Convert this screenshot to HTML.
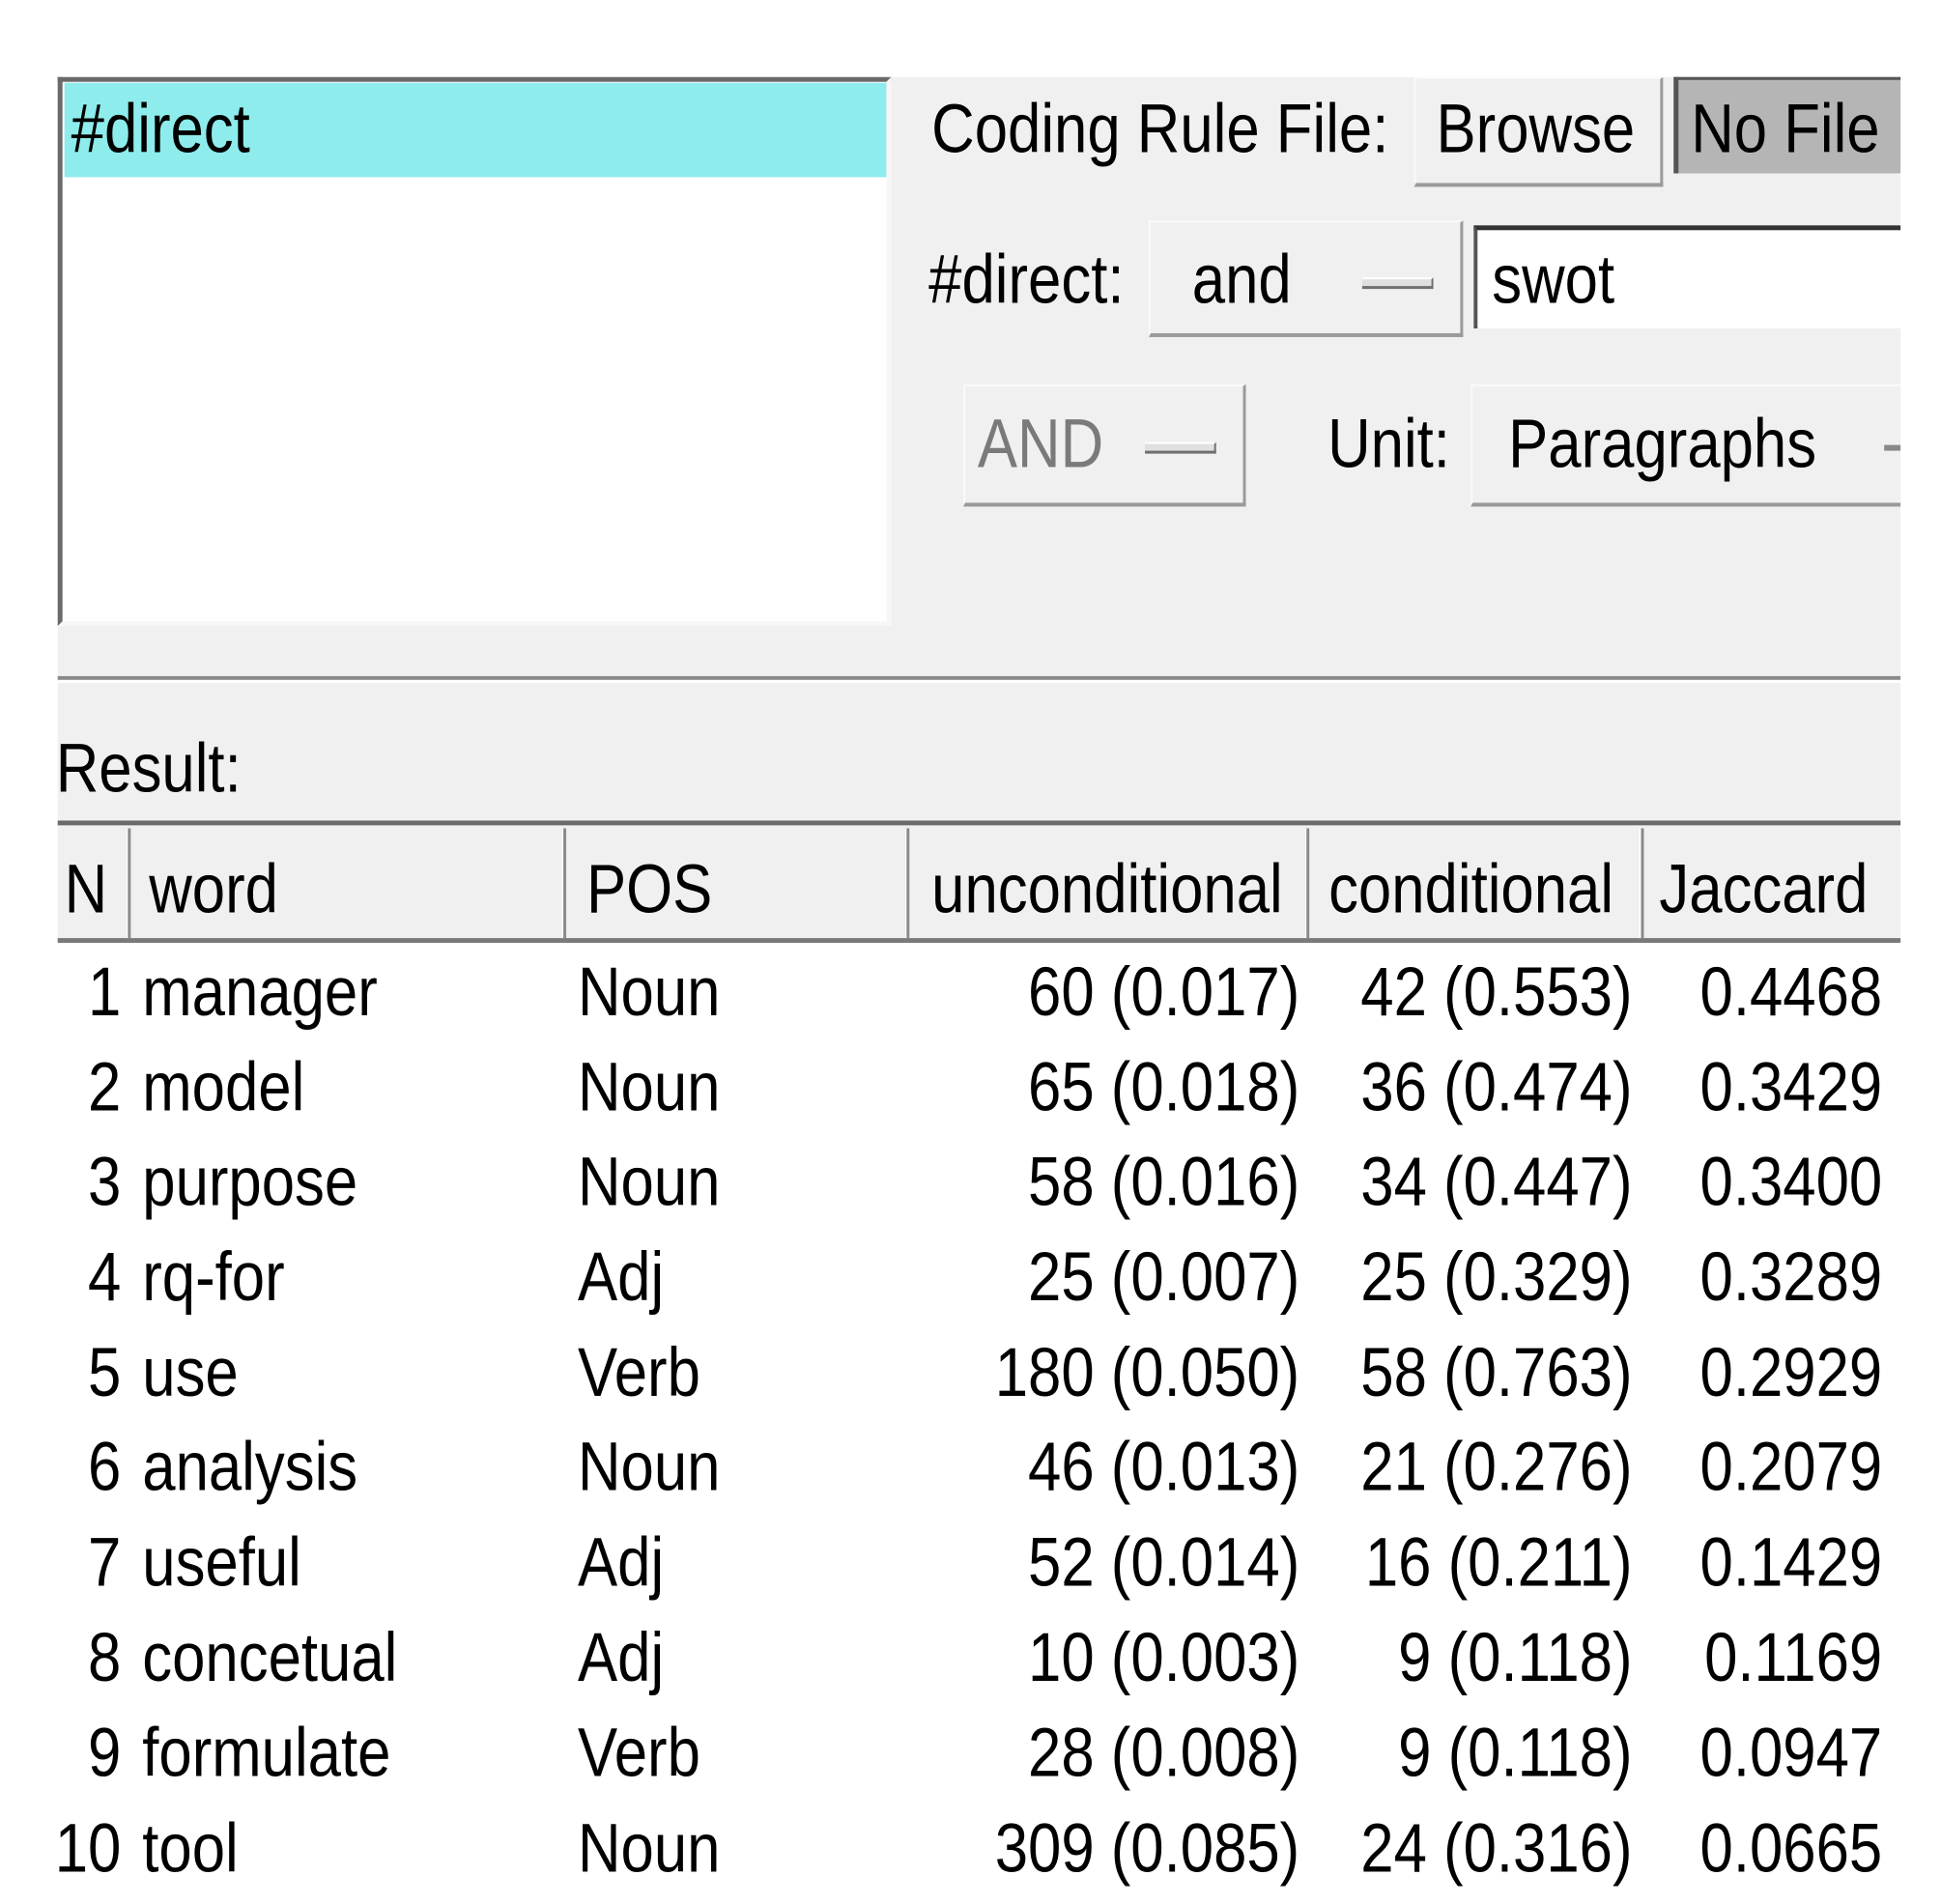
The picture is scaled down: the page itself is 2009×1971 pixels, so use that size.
<!DOCTYPE html>
<html><head><meta charset="utf-8"><style>
html,body{margin:0;padding:0;background:#fff;}
body{width:2009px;height:1971px;position:relative;overflow:hidden;font-family:"Liberation Sans",Arial,sans-serif;color:#000;}
#w{position:absolute;left:0;top:0;width:2009px;height:1971px;transform:scale(0.995,0.997);transform-origin:0 0;}
.a{position:absolute;box-sizing:border-box;}
.t{position:absolute;font-size:62px;line-height:62px;transform:scaleY(1.16);white-space:nowrap;}
.r{text-align:right;}
.btn{position:absolute;box-sizing:border-box;background:#f0f0f0;border-top:2px solid #fafafa;border-left:2px solid #fafafa;border-right:3px solid #9a9a9a;border-bottom:4px solid #9a9a9a;}
.ind{position:absolute;height:12px;background:#e0e0e0;border-top:2px solid #fff;border-bottom:3px solid #707070;border-right:2px solid #707070;box-sizing:border-box;}
</style></head><body><div id="w">
<div class="a" style="left:60px;top:80px;width:1917px;height:622px;background:#f0f0f0;"></div>
<div class="a" style="left:60px;top:702px;width:1917px;height:4px;background:#8a8a8a;"></div>
<div class="a" style="left:60px;top:706px;width:1917px;height:3px;background:#fff;"></div>
<div class="a" style="left:60px;top:709px;width:1917px;height:145px;background:#f0f0f0;"></div>
<div class="a" style="left:60px;top:80px;width:867px;height:570px;background:#fff;border-top:5px solid #6a6a6a;border-left:5px solid #6a6a6a;border-right:5px solid #f7f7f7;border-bottom:5px solid #f7f7f7;"></div>
<div class="a" style="left:67px;top:86px;width:855px;height:98px;background:#8eecec;"></div>
<div class="t" style="left:74px;top:104px;">#direct</div>
<div class="t" style="left:969px;top:104px;">Coding Rule File:</div>
<div class="btn" style="left:1471px;top:80px;width:259px;height:114px;"></div>
<div class="t" style="left:1494px;top:104px;">Browse</div>
<div class="a" style="left:1741px;top:80px;width:236px;height:100px;background:#b5b5b5;border-left:5px solid #555;border-top:3px solid #555;"></div>
<div class="t" style="left:1759px;top:104px;">No File</div>
<div class="t" style="left:966px;top:260px;">#direct:</div>
<div class="btn" style="left:1195px;top:229px;width:327px;height:121px;"></div>
<div class="t" style="left:1240px;top:260px;">and</div>
<div class="ind" style="left:1417px;top:288px;width:74px;"></div>
<div class="a" style="left:1533px;top:234px;width:444px;height:107px;background:#fff;border-top:5px solid #333;border-left:4px solid #555;"></div>
<div class="t" style="left:1552px;top:260px;">swot</div>
<div class="btn" style="left:1002px;top:399px;width:294px;height:127px;"></div>
<div class="t" style="left:1017px;top:431px;color:#7a7a7a;">AND</div>
<div class="ind" style="left:1191px;top:459px;width:74px;"></div>
<div class="t" style="left:1381px;top:431px;">Unit:</div>
<div class="btn" style="left:1530px;top:399px;width:447px;height:127px;border-right:none;"></div>
<div class="t" style="left:1569px;top:431px;">Paragraphs</div>
<div class="a" style="left:1960px;top:462px;width:17px;height:6px;background:#888;"></div>
<div class="t" style="left:58px;top:768px;">Result:</div>
<div class="a" style="left:60px;top:852px;width:1917px;height:5px;background:#6a6a6a;"></div>
<div class="a" style="left:60px;top:857px;width:1917px;height:119px;background:#f0f0f0;"></div>
<div class="a" style="left:60px;top:974px;width:1917px;height:5px;background:#7a7a7a;"></div>
<div class="a" style="left:131px;top:860px;width:5px;height:114px;background:#8a8a8a;border-left:2px solid #fff;"></div>
<div class="a" style="left:584px;top:860px;width:5px;height:114px;background:#8a8a8a;border-left:2px solid #fff;"></div>
<div class="a" style="left:941px;top:860px;width:5px;height:114px;background:#8a8a8a;border-left:2px solid #fff;"></div>
<div class="a" style="left:1357px;top:860px;width:5px;height:114px;background:#8a8a8a;border-left:2px solid #fff;"></div>
<div class="a" style="left:1705px;top:860px;width:5px;height:114px;background:#8a8a8a;border-left:2px solid #fff;"></div>
<div class="t" style="left:67px;top:893px;">N</div>
<div class="t" style="left:155px;top:893px;">word</div>
<div class="t" style="left:610px;top:893px;">POS</div>
<div class="t" style="left:969px;top:893px;">unconditional</div>
<div class="t" style="left:1382px;top:893px;">conditional</div>
<div class="t" style="left:1726px;top:893px;">Jaccard</div>
<div class="t r" style="right:1883px;top:1000px;">1</div><div class="t" style="left:148px;top:1000px;">manager</div><div class="t" style="left:601px;top:1000px;">Noun</div><div class="t r" style="right:657px;top:1000px;">60 (0.017)</div><div class="t r" style="right:311px;top:1000px;">42 (0.553)</div><div class="t r" style="right:51px;top:1000px;">0.4468</div>
<div class="t r" style="right:1883px;top:1099px;">2</div><div class="t" style="left:148px;top:1099px;">model</div><div class="t" style="left:601px;top:1099px;">Noun</div><div class="t r" style="right:657px;top:1099px;">65 (0.018)</div><div class="t r" style="right:311px;top:1099px;">36 (0.474)</div><div class="t r" style="right:51px;top:1099px;">0.3429</div>
<div class="t r" style="right:1883px;top:1197px;">3</div><div class="t" style="left:148px;top:1197px;">purpose</div><div class="t" style="left:601px;top:1197px;">Noun</div><div class="t r" style="right:657px;top:1197px;">58 (0.016)</div><div class="t r" style="right:311px;top:1197px;">34 (0.447)</div><div class="t r" style="right:51px;top:1197px;">0.3400</div>
<div class="t r" style="right:1883px;top:1296px;">4</div><div class="t" style="left:148px;top:1296px;">rq-for</div><div class="t" style="left:601px;top:1296px;">Adj</div><div class="t r" style="right:657px;top:1296px;">25 (0.007)</div><div class="t r" style="right:311px;top:1296px;">25 (0.329)</div><div class="t r" style="right:51px;top:1296px;">0.3289</div>
<div class="t r" style="right:1883px;top:1395px;">5</div><div class="t" style="left:148px;top:1395px;">use</div><div class="t" style="left:601px;top:1395px;">Verb</div><div class="t r" style="right:657px;top:1395px;">180 (0.050)</div><div class="t r" style="right:311px;top:1395px;">58 (0.763)</div><div class="t r" style="right:51px;top:1395px;">0.2929</div>
<div class="t r" style="right:1883px;top:1493px;">6</div><div class="t" style="left:148px;top:1493px;">analysis</div><div class="t" style="left:601px;top:1493px;">Noun</div><div class="t r" style="right:657px;top:1493px;">46 (0.013)</div><div class="t r" style="right:311px;top:1493px;">21 (0.276)</div><div class="t r" style="right:51px;top:1493px;">0.2079</div>
<div class="t r" style="right:1883px;top:1592px;">7</div><div class="t" style="left:148px;top:1592px;">useful</div><div class="t" style="left:601px;top:1592px;">Adj</div><div class="t r" style="right:657px;top:1592px;">52 (0.014)</div><div class="t r" style="right:311px;top:1592px;">16 (0.211)</div><div class="t r" style="right:51px;top:1592px;">0.1429</div>
<div class="t r" style="right:1883px;top:1691px;">8</div><div class="t" style="left:148px;top:1691px;">concetual</div><div class="t" style="left:601px;top:1691px;">Adj</div><div class="t r" style="right:657px;top:1691px;">10 (0.003)</div><div class="t r" style="right:311px;top:1691px;">9 (0.118)</div><div class="t r" style="right:51px;top:1691px;">0.1169</div>
<div class="t r" style="right:1883px;top:1790px;">9</div><div class="t" style="left:148px;top:1790px;">formulate</div><div class="t" style="left:601px;top:1790px;">Verb</div><div class="t r" style="right:657px;top:1790px;">28 (0.008)</div><div class="t r" style="right:311px;top:1790px;">9 (0.118)</div><div class="t r" style="right:51px;top:1790px;">0.0947</div>
<div class="t r" style="right:1883px;top:1889px;">10</div><div class="t" style="left:148px;top:1889px;">tool</div><div class="t" style="left:601px;top:1889px;">Noun</div><div class="t r" style="right:657px;top:1889px;">309 (0.085)</div><div class="t r" style="right:311px;top:1889px;">24 (0.316)</div><div class="t r" style="right:51px;top:1889px;">0.0665</div>
</div></body></html>
